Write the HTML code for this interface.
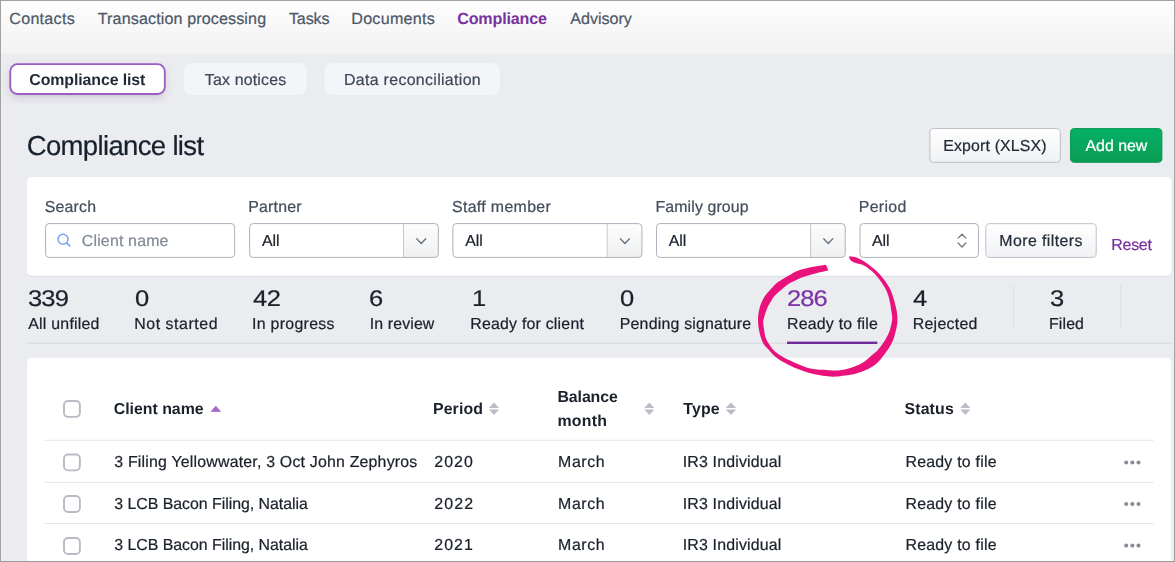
<!DOCTYPE html>
<html lang="en"><head><meta charset="utf-8"><title>Compliance list</title>
<style>

html,body{margin:0;padding:0}
body{width:1175px;height:562px;position:relative;overflow:hidden;background:#ebecf0;
 font-family:"Liberation Sans",sans-serif;transform:translateZ(0);text-rendering:geometricPrecision}
.t{position:absolute;white-space:nowrap;line-height:1;z-index:3;-webkit-text-stroke:0.22px currentColor}
.a{position:absolute;box-sizing:border-box}
.nav{left:0;top:0;width:1175px;height:53.8px;background:linear-gradient(#ffffff 0%,#fdfdfd 8%,#f6f6f7 65%,#f2f2f3 100%)}
.frame{position:absolute;left:0;top:0;width:1175px;height:562px;box-sizing:border-box;z-index:9;
 border:1px solid #a2a2a2;border-bottom:1.5px solid #9a9a9a;pointer-events:none}
svg{position:absolute;left:0;top:0;overflow:visible}

</style></head>
<body>
<div class="a nav"></div>
<div class="a" style="left:10.4px;top:64.3px;width:154.3px;height:29.6px;border-radius:7px;box-shadow:0 4px 10px rgba(40,30,70,.14),0 1px 3px rgba(40,30,70,.09)"></div>
<svg width="1175" height="562" viewBox="0 0 1175 562" style="z-index:1">
<defs><linearGradient id="gb" x1="0" y1="0" x2="0" y2="1"><stop offset="0" stop-color="#ffffff"/><stop offset="1" stop-color="#f0f1f3"/></linearGradient><linearGradient id="gg" x1="0" y1="0" x2="0" y2="1"><stop offset="0" stop-color="#04b166"/><stop offset="1" stop-color="#0c9c53"/></linearGradient><linearGradient id="gs" x1="0" y1="0" x2="0" y2="1"><stop offset="0" stop-color="#fdfdfd"/><stop offset="1" stop-color="#eff0f1"/></linearGradient></defs>
<rect x="10.30" y="64.20" width="154.50" height="29.80" rx="7.10" fill="#ffffff" stroke="#9b5dc1" stroke-width="1.8"/>
<rect x="183.80" y="63.00" width="122.90" height="32.10" rx="8.00" fill="#f4f5f8"/>
<rect x="324.60" y="63.00" width="175.40" height="32.10" rx="8.00" fill="#f4f5f8"/>
<rect x="929.88" y="128.57" width="130.45" height="33.75" rx="4.03" fill="url(#gb)" stroke="#b9bdc5" stroke-width="0.95"/>
<rect x="1070.47" y="128.57" width="91.45" height="33.75" rx="4.03" fill="url(#gg)" stroke="#0b9450" stroke-width="0.95"/>
<rect x="27.00" y="177.50" width="1144.60" height="99.20" rx="4.50" fill="#dcdee3"/>
<rect x="27.00" y="177.10" width="1144.60" height="98.70" rx="4.50" fill="#ffffff"/>
<rect x="27.05" y="357.70" width="1144.15" height="222.30" rx="4.50" fill="#ffffff"/>
<rect x="45.58" y="223.57" width="189.05" height="33.85" rx="3.52" fill="#ffffff" stroke="#a9aeb8" stroke-width="0.95"/>
<rect x="249.20" y="223.10" width="189.60" height="34.80" rx="4.00" fill="#ffffff"/>
<path d="M403.50 223.50H435.20A3.6 3.6 0 0 1 438.40 226.70V254.30A3.6 3.6 0 0 1 435.20 257.50H403.50Z" fill="url(#gs)"/>
<path d="M403.50 223.50V257.50" stroke="#b6bac3" stroke-width="0.75"/>
<rect x="249.67" y="223.57" width="188.65" height="33.85" rx="3.52" fill="none" stroke="#a9aeb8" stroke-width="0.95"/>
<path d="M416.75 238.75L421.25 243.45L425.75 238.75" fill="none" stroke="#6b7484" stroke-width="1.35" stroke-linecap="round" stroke-linejoin="round"/>
<rect x="452.40" y="223.10" width="190.00" height="34.80" rx="4.00" fill="#ffffff"/>
<path d="M607.20 223.50H638.80A3.6 3.6 0 0 1 642.00 226.70V254.30A3.6 3.6 0 0 1 638.80 257.50H607.20Z" fill="url(#gs)"/>
<path d="M607.20 223.50V257.50" stroke="#b6bac3" stroke-width="0.75"/>
<rect x="452.88" y="223.57" width="189.05" height="33.85" rx="3.52" fill="none" stroke="#a9aeb8" stroke-width="0.95"/>
<path d="M620.40 238.75L624.90 243.45L629.40 238.75" fill="none" stroke="#6b7484" stroke-width="1.35" stroke-linecap="round" stroke-linejoin="round"/>
<rect x="656.00" y="223.10" width="189.70" height="34.80" rx="4.00" fill="#ffffff"/>
<path d="M810.60 223.50H842.10A3.6 3.6 0 0 1 845.30 226.70V254.30A3.6 3.6 0 0 1 842.10 257.50H810.60Z" fill="url(#gs)"/>
<path d="M810.60 223.50V257.50" stroke="#b6bac3" stroke-width="0.75"/>
<rect x="656.48" y="223.57" width="188.75" height="33.85" rx="3.52" fill="none" stroke="#a9aeb8" stroke-width="0.95"/>
<path d="M823.75 238.75L828.25 243.45L832.75 238.75" fill="none" stroke="#6b7484" stroke-width="1.35" stroke-linecap="round" stroke-linejoin="round"/>
<rect x="859.98" y="223.57" width="118.45" height="33.85" rx="3.52" fill="#ffffff" stroke="#a9aeb8" stroke-width="0.95"/>
<rect x="985.77" y="223.67" width="110.45" height="33.75" rx="4.03" fill="url(#gb)" stroke="#bbbfc7" stroke-width="0.95"/>
<rect x="27" y="342.6" width="1144.5" height="1.4" fill="#dcdee3"/>
<rect x="787" y="341.6" width="90.3" height="2.4" fill="#6f2c9e"/>
<rect x="1013.2" y="285" width="0.9" height="43" fill="#dcdee3"/>
<rect x="1120.2" y="285" width="0.9" height="43" fill="#dcdee3"/>
<rect x="45" y="439.80" width="1108.5" height="1" fill="#e2e5e8"/>
<rect x="45" y="481.80" width="1108.5" height="1" fill="#e2e5e8"/>
<rect x="45" y="522.90" width="1108.5" height="1" fill="#e2e5e8"/>
<rect x="64.00" y="401.00" width="15.90" height="15.90" rx="4.05" fill="#ffffff" stroke="#b8bbc3" stroke-width="1.9"/>
<rect x="64.00" y="454.45" width="15.90" height="15.90" rx="4.05" fill="#ffffff" stroke="#b8bbc3" stroke-width="1.9"/>
<rect x="64.00" y="496.05" width="15.90" height="15.90" rx="4.05" fill="#ffffff" stroke="#b8bbc3" stroke-width="1.9"/>
<rect x="64.00" y="538.05" width="15.90" height="15.90" rx="4.05" fill="#ffffff" stroke="#b8bbc3" stroke-width="1.9"/>
<circle cx="63.05" cy="239.25" r="5.0" fill="none" stroke="#7ba4ee" stroke-width="1.5"/>
<path d="M66.9 243.2L69.8 245.9" stroke="#7ba4ee" stroke-width="1.6" stroke-linecap="round"/>
<path d="M958.10 243.05L962.00 246.95L965.90 243.05" fill="none" stroke="#6e7684" stroke-width="1.3" stroke-linecap="round" stroke-linejoin="round"/>
<path d="M958.1 238.1L962 234.2L965.9 238.1" fill="none" stroke="#6e7684" stroke-width="1.3" stroke-linecap="round" stroke-linejoin="round"/>
<path d="M211.2 411.4L215.85 406.2L220.5 411.4Z" fill="#a468c8" stroke="#a468c8" stroke-width="0.8" stroke-linejoin="round"/>
<path d="M488.9 407.9L494.0 402.5L499.1 407.9ZM488.9 409.6L494.0 415.1L499.1 409.6Z" fill="#b9bdc5"/>
<path d="M644.2 407.9L649.3 402.5L654.4 407.9ZM644.2 409.6L649.3 415.1L654.4 409.6Z" fill="#b9bdc5"/>
<path d="M725.7 407.9L731.0 402.5L736.2 407.9ZM725.7 409.6L731.0 415.1L736.2 409.6Z" fill="#b9bdc5"/>
<path d="M960.2 407.9L965.3 402.5L970.4 407.9ZM960.2 409.6L965.3 415.1L970.4 409.6Z" fill="#b9bdc5"/>
<circle cx="1126.2" cy="462.5" r="2.05" fill="#878e9b"/>
<circle cx="1132.35" cy="462.5" r="2.05" fill="#878e9b"/>
<circle cx="1138.5" cy="462.5" r="2.05" fill="#878e9b"/>
<circle cx="1126.2" cy="504.0" r="2.05" fill="#878e9b"/>
<circle cx="1132.35" cy="504.0" r="2.05" fill="#878e9b"/>
<circle cx="1138.5" cy="504.0" r="2.05" fill="#878e9b"/>
<circle cx="1126.2" cy="545.6" r="2.05" fill="#878e9b"/>
<circle cx="1132.35" cy="545.6" r="2.05" fill="#878e9b"/>
<circle cx="1138.5" cy="545.6" r="2.05" fill="#878e9b"/>
</svg>
<svg width="1175" height="562" viewBox="0 0 1175 562" style="z-index:5"><path d="M824.4 264.9C823.0 265.1 819.1 265.7 816.3 266.2C813.5 266.7 810.2 267.3 807.5 267.9C804.8 268.5 801.9 269.3 799.8 270.0C797.7 270.7 797.0 271.0 795.0 272.0C793.0 273.0 790.2 274.7 787.9 276.0C785.6 277.3 783.2 278.7 781.2 280.0C779.2 281.3 777.6 282.3 775.7 284.0C773.8 285.7 771.8 288.0 770.0 290.0C768.2 292.0 766.3 294.0 764.9 296.0C763.5 298.0 762.5 300.2 761.7 302.0C760.9 303.8 760.4 305.3 759.9 307.0C759.4 308.7 759.0 310.2 758.7 312.0C758.4 313.8 758.1 316.0 758.0 318.0C757.9 320.0 758.1 322.4 758.2 324.0C758.3 325.6 758.3 325.8 758.6 327.5C758.9 329.2 759.2 331.4 759.9 334.0C760.6 336.6 761.6 340.4 763.0 342.9C764.4 345.4 766.2 346.9 768.1 349.1C770.0 351.3 772.0 353.9 774.4 356.0C776.8 358.1 779.9 360.1 782.8 361.8C785.7 363.5 789.1 365.1 792.0 366.4C794.9 367.7 797.1 368.7 800.0 369.8C802.9 370.9 806.2 372.1 809.5 373.0C812.8 373.9 816.6 374.7 820.0 375.3C823.4 375.9 827.3 376.3 830.0 376.5C832.7 376.7 833.5 376.8 836.0 376.6C838.5 376.4 841.8 376.0 845.2 375.5C848.6 375.0 852.6 374.5 856.4 373.4C860.2 372.3 864.6 370.9 868.2 369.0C871.8 367.1 875.1 365.0 878.2 362.0C881.3 359.0 884.4 354.5 886.8 351.1C889.2 347.7 890.9 344.8 892.4 341.7C893.9 338.6 894.7 335.4 895.5 332.3C896.3 329.2 897.0 326.0 897.3 323.3C897.6 320.6 897.4 318.3 897.3 316.0C897.1 313.7 897.0 312.2 896.4 309.5C895.8 306.8 894.9 302.9 893.9 299.5C892.9 296.1 891.8 292.4 890.1 289.0C888.4 285.6 886.0 282.3 883.8 279.3C881.6 276.3 879.2 273.6 876.7 271.2C874.2 268.8 871.2 266.6 868.9 264.8C866.5 263.0 864.8 261.8 862.6 260.5C860.4 259.2 858.2 258.0 855.9 257.3C853.6 256.6 850.1 256.4 849.0 256.2L849.0 257.1C849.4 257.8 850.1 260.1 851.2 261.1C852.3 262.1 853.9 262.3 855.7 262.9C857.5 263.5 859.9 263.8 861.9 264.6C863.9 265.5 865.7 266.5 867.8 268.0C869.9 269.5 872.3 271.3 874.6 273.7C876.9 276.1 879.4 279.2 881.4 282.2C883.4 285.1 885.4 288.2 886.8 291.4C888.2 294.6 889.0 297.9 889.7 301.2C890.5 304.5 890.9 308.3 891.3 311.0C891.7 313.7 892.2 315.4 892.2 317.5C892.2 319.6 892.0 321.3 891.4 323.9C890.8 326.5 890.1 330.0 888.8 333.0C887.5 336.0 885.6 339.3 883.8 342.1C882.0 344.9 879.9 347.7 877.8 350.0C875.7 352.3 873.3 354.0 871.0 356.0C868.7 358.0 866.1 360.4 863.8 362.0C861.5 363.6 859.4 364.3 857.0 365.4C854.6 366.4 852.0 367.5 849.5 368.3C847.0 369.1 844.6 369.6 842.0 370.0C839.4 370.4 836.6 370.6 834.0 370.6C831.4 370.6 829.1 370.2 826.3 370.0C823.5 369.8 820.3 370.0 817.0 369.6C813.7 369.2 810.0 368.5 806.5 367.4C803.0 366.3 799.7 364.8 796.0 363.2C792.3 361.6 787.8 359.6 784.3 357.7C780.8 355.8 777.7 353.9 775.2 351.7C772.7 349.5 770.9 347.1 769.3 344.6C767.7 342.1 766.3 339.5 765.4 336.9C764.5 334.3 764.4 331.6 764.0 329.1C763.6 326.6 763.2 323.9 763.2 322.0C763.2 320.1 763.6 319.7 764.0 318.0C764.4 316.3 765.1 314.0 765.8 312.0C766.5 310.0 767.4 307.7 768.2 306.0C769.0 304.3 769.6 303.7 770.6 302.0C771.6 300.3 772.8 298.0 774.5 296.0C776.2 294.0 778.7 292.0 781.0 290.0C783.3 288.0 786.3 285.5 788.5 284.0C790.7 282.5 792.2 282.0 794.2 281.0C796.2 280.0 798.4 278.8 800.4 278.0C802.4 277.2 804.2 276.7 806.4 276.0C808.6 275.3 811.1 274.7 813.5 274.0C815.9 273.3 818.3 272.6 820.8 272.0C823.2 271.4 827.0 270.7 828.2 270.4Q827.6 267.0 826.0 265.2Q825.4 264.7 824.4 264.85Z" fill="#e9127d"/></svg>
<div class="t" id="n1" style="left:9.25px;top:11.37px;font-size:16.1px;color:#4d5868;letter-spacing:0.279px;">Contacts</div>
<div class="t" id="n2" style="left:97.75px;top:11.37px;font-size:16.1px;color:#4d5868;letter-spacing:0.121px;">Transaction processing</div>
<div class="t" id="n3" style="left:289.00px;top:11.37px;font-size:16.1px;color:#4d5868;letter-spacing:-0.175px;">Tasks</div>
<div class="t" id="n4" style="left:351.25px;top:11.37px;font-size:16.1px;color:#4d5868;letter-spacing:0.275px;">Documents</div>
<div class="t" id="n5" style="left:457.25px;top:11.37px;font-size:16.1px;color:#7a309f;font-weight:700;-webkit-text-stroke:0;letter-spacing:-0.167px;">Compliance</div>
<div class="t" id="n6" style="left:570.25px;top:11.37px;font-size:16.1px;color:#4d5868;letter-spacing:-0.007px;">Advisory</div>
<div class="t" id="p1" style="left:29.25px;top:72.54px;font-size:15.9px;color:#1f2937;font-weight:700;-webkit-text-stroke:0;letter-spacing:-0.093px;">Compliance list</div>
<div class="t" id="p2" style="left:204.75px;top:72.54px;font-size:15.9px;color:#3f4859;letter-spacing:0.195px;">Tax notices</div>
<div class="t" id="p3" style="left:344.00px;top:72.54px;font-size:15.9px;color:#3f4859;letter-spacing:0.328px;">Data reconciliation</div>
<div class="t" id="h1" style="left:26.75px;top:131.72px;font-size:27.5px;color:#17202b;letter-spacing:-0.654px;">Compliance list</div>
<div class="t" id="b1" style="left:943.25px;top:138.54px;font-size:15.9px;color:#232c39;letter-spacing:0.150px;">Export (XLSX)</div>
<div class="t" id="b2" style="left:1085.50px;top:138.54px;font-size:15.9px;color:#ffffff;">Add new</div>
<div class="t" id="l1" style="left:44.75px;top:199.54px;font-size:15.9px;color:#434d5c;letter-spacing:0.190px;">Search</div>
<div class="t" id="l2" style="left:248.25px;top:199.54px;font-size:15.9px;color:#434d5c;letter-spacing:0.208px;">Partner</div>
<div class="t" id="l3" style="left:452.00px;top:199.54px;font-size:15.9px;color:#434d5c;letter-spacing:0.341px;">Staff member</div>
<div class="t" id="l4" style="left:655.50px;top:199.54px;font-size:15.9px;color:#434d5c;letter-spacing:0.114px;">Family group</div>
<div class="t" id="l5" style="left:858.75px;top:199.54px;font-size:15.9px;color:#434d5c;letter-spacing:0.330px;">Period</div>
<div class="t" id="i0" style="left:81.75px;top:233.54px;font-size:15.9px;color:#828a97;letter-spacing:0.190px;">Client name</div>
<div class="t" id="i1" style="left:262.00px;top:233.54px;font-size:15.9px;color:#1a212b;letter-spacing:-0.050px;">All</div>
<div class="t" id="i2" style="left:465.25px;top:233.54px;font-size:15.9px;color:#1a212b;letter-spacing:-0.050px;">All</div>
<div class="t" id="i3" style="left:668.75px;top:233.54px;font-size:15.9px;color:#1a212b;letter-spacing:-0.050px;">All</div>
<div class="t" id="i4" style="left:872.00px;top:233.54px;font-size:15.9px;color:#1a212b;letter-spacing:-0.050px;">All</div>
<div class="t" id="i5" style="left:999.25px;top:233.54px;font-size:15.9px;color:#232c39;letter-spacing:0.423px;">More filters</div>
<div class="t" id="i6" style="left:1111.25px;top:237.54px;font-size:15.9px;color:#7a309f;letter-spacing:-0.212px;">Reset</div>
<div class="t" id="s1" style="left:27.75px;top:287.86px;font-size:22.6px;color:#1a212b;transform:scaleX(1.13);transform-origin:0 0;letter-spacing:-0.750px;">339</div>
<div class="t" id="s2" style="left:134.75px;top:287.86px;font-size:22.6px;color:#1a212b;transform:scaleX(1.13);transform-origin:0 0;">0</div>
<div class="t" id="s3" style="left:252.50px;top:287.86px;font-size:22.6px;color:#1a212b;transform:scaleX(1.13);transform-origin:0 0;letter-spacing:-0.300px;">42</div>
<div class="t" id="s4" style="left:369.25px;top:287.86px;font-size:22.6px;color:#1a212b;transform:scaleX(1.13);transform-origin:0 0;">6</div>
<div class="t" id="s5" style="left:471.75px;top:287.86px;font-size:22.6px;color:#1a212b;transform:scaleX(1.13);transform-origin:0 0;">1</div>
<div class="t" id="s6" style="left:619.75px;top:287.86px;font-size:22.6px;color:#1a212b;transform:scaleX(1.13);transform-origin:0 0;">0</div>
<div class="t" id="s7" style="left:787.25px;top:287.86px;font-size:22.6px;color:#7b35a3;transform:scaleX(1.13);transform-origin:0 0;letter-spacing:-0.875px;">286</div>
<div class="t" id="s8" style="left:912.50px;top:287.86px;font-size:22.6px;color:#1a212b;transform:scaleX(1.13);transform-origin:0 0;">4</div>
<div class="t" id="s9" style="left:1049.75px;top:287.86px;font-size:22.6px;color:#1a212b;transform:scaleX(1.13);transform-origin:0 0;">3</div>
<div class="t" id="t1" style="left:28.25px;top:316.54px;font-size:15.9px;color:#1a212b;letter-spacing:0.230px;">All unfiled</div>
<div class="t" id="t2" style="left:134.25px;top:316.54px;font-size:15.9px;color:#1a212b;letter-spacing:0.555px;">Not started</div>
<div class="t" id="t3" style="left:252.00px;top:316.54px;font-size:15.9px;color:#1a212b;letter-spacing:0.305px;">In progress</div>
<div class="t" id="t4" style="left:369.75px;top:316.54px;font-size:15.9px;color:#1a212b;letter-spacing:0.125px;">In review</div>
<div class="t" id="t5" style="left:470.25px;top:316.54px;font-size:15.9px;color:#1a212b;letter-spacing:0.213px;">Ready for client</div>
<div class="t" id="t6" style="left:619.75px;top:316.54px;font-size:15.9px;color:#1a212b;letter-spacing:0.206px;">Pending signature</div>
<div class="t" id="t7" style="left:787.00px;top:316.54px;font-size:15.9px;color:#1a212b;letter-spacing:0.213px;">Ready to file</div>
<div class="t" id="t8" style="left:912.75px;top:316.54px;font-size:15.9px;color:#1a212b;letter-spacing:0.264px;">Rejected</div>
<div class="t" id="t9" style="left:1049.00px;top:316.54px;font-size:15.9px;color:#1a212b;letter-spacing:0.125px;">Filed</div>
<div class="t" id="c1" style="left:113.75px;top:401.54px;font-size:15.9px;color:#1a212b;font-weight:700;-webkit-text-stroke:0;letter-spacing:-0.025px;">Client name</div>
<div class="t" id="c2" style="left:433.00px;top:401.54px;font-size:15.9px;color:#1a212b;font-weight:700;-webkit-text-stroke:0;letter-spacing:0.090px;">Period</div>
<div class="t" id="c3a" style="left:557.50px;top:389.54px;font-size:15.9px;color:#1a212b;font-weight:700;-webkit-text-stroke:0;letter-spacing:-0.117px;">Balance</div>
<div class="t" id="c3b" style="left:557.50px;top:413.54px;font-size:15.9px;color:#1a212b;font-weight:700;-webkit-text-stroke:0;letter-spacing:0.237px;">month</div>
<div class="t" id="c4" style="left:683.25px;top:401.54px;font-size:15.9px;color:#1a212b;font-weight:700;-webkit-text-stroke:0;letter-spacing:0.133px;">Type</div>
<div class="t" id="c5" style="left:904.50px;top:401.54px;font-size:15.9px;color:#1a212b;font-weight:700;-webkit-text-stroke:0;letter-spacing:0.130px;">Status</div>
<div class="t" id="r0a" style="left:114.25px;top:454.54px;font-size:15.9px;color:#1a212b;letter-spacing:0.200px;">3 Filing Yellowwater, 3 Oct John Zephyros</div>
<div class="t" id="r0b" style="left:434.25px;top:454.54px;font-size:15.9px;color:#1a212b;letter-spacing:1.083px;">2020</div>
<div class="t" id="r0c" style="left:558.00px;top:454.54px;font-size:15.9px;color:#1a212b;letter-spacing:0.638px;">March</div>
<div class="t" id="r0d" style="left:682.75px;top:454.54px;font-size:15.9px;color:#1a212b;letter-spacing:0.181px;">IR3 Individual</div>
<div class="t" id="r0e" style="left:905.50px;top:454.54px;font-size:15.9px;color:#1a212b;letter-spacing:0.221px;">Ready to file</div>
<div class="t" id="r1a" style="left:114.25px;top:496.54px;font-size:15.9px;color:#1a212b;letter-spacing:-0.025px;">3 LCB Bacon Filing, Natalia</div>
<div class="t" id="r1b" style="left:434.25px;top:496.54px;font-size:15.9px;color:#1a212b;letter-spacing:1.167px;">2022</div>
<div class="t" id="r1c" style="left:558.00px;top:496.54px;font-size:15.9px;color:#1a212b;letter-spacing:0.638px;">March</div>
<div class="t" id="r1d" style="left:682.75px;top:496.54px;font-size:15.9px;color:#1a212b;letter-spacing:0.181px;">IR3 Individual</div>
<div class="t" id="r1e" style="left:905.50px;top:496.54px;font-size:15.9px;color:#1a212b;letter-spacing:0.221px;">Ready to file</div>
<div class="t" id="r2a" style="left:114.25px;top:537.54px;font-size:15.9px;color:#1a212b;letter-spacing:-0.025px;">3 LCB Bacon Filing, Natalia</div>
<div class="t" id="r2b" style="left:434.25px;top:537.54px;font-size:15.9px;color:#1a212b;letter-spacing:1.083px;">2021</div>
<div class="t" id="r2c" style="left:558.00px;top:537.54px;font-size:15.9px;color:#1a212b;letter-spacing:0.638px;">March</div>
<div class="t" id="r2d" style="left:682.75px;top:537.54px;font-size:15.9px;color:#1a212b;letter-spacing:0.181px;">IR3 Individual</div>
<div class="t" id="r2e" style="left:905.50px;top:537.54px;font-size:15.9px;color:#1a212b;letter-spacing:0.221px;">Ready to file</div>
<div class="frame"></div>
</body></html>
